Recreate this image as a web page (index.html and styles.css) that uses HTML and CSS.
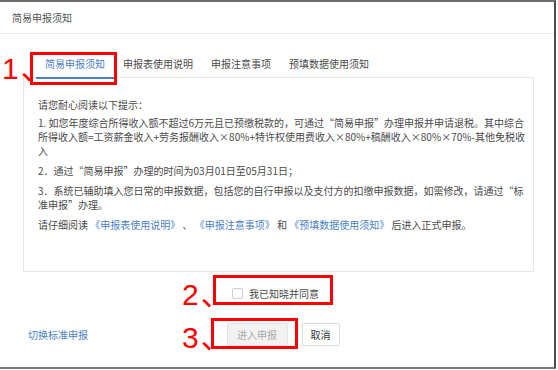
FILE: index.html
```html
<!DOCTYPE html>
<html lang="zh-CN">
<head>
  <meta charset="UTF-8" />
  <meta name="viewport" content="width=device-width, initial-scale=1.0" />
  <title>简易申报须知</title>
  <link rel="stylesheet" href="styles.css">
</head>
<body>
  <div class="dialog">
    <!-- Header -->
    <div class="dialog-header">简易申报须知</div>

    <div class="dialog-body">
      <!-- Tabs -->
      <div class="tabs">
        <div class="tab active">简易申报须知</div>
        <div class="tab">申报表使用说明</div>
        <div class="tab">申报注意事项</div>
        <div class="tab">预填数据使用须知</div>
      </div>

      <!-- Notice text -->
      <div class="notice">
        <p class="notice-title">请您耐心阅读以下提示：</p>
        <p>1. 如您年度综合所得收入额不超过6万元且已预缴税款的，可通过“简易申报”办理申报并申请退税。其中综合<br>所得收入额=工资薪金收入+劳务报酬收入×80%+特许权使用费收入×80%+稿酬收入×80%×70%-其他免税收<br>入</p>
        <p>2．通过“简易申报”办理的时间为03月01日至05月31日；</p>
        <p>3．系统已辅助填入您日常的申报数据，包括您的自行申报以及支付方的扣缴申报数据，如需修改，请通过“标<br>准申报”办理。</p>
        <p>请仔细阅读 <a class="link">《申报表使用说明》</a> 、 <a class="link">《申报注意事项》</a> 和 <a class="link">《预填数据使用须知》</a> 后进入正式申报。</p>
      </div>

      <!-- Agree -->
      <label class="agree">
        <span class="checkbox"></span>
        <span>我已知晓并同意</span>
      </label>
    </div>

    <!-- Footer -->
    <div class="dialog-footer">
      <a class="link switch-link">切换标准申报</a>
      <div class="buttons">
        <button class="btn btn-disabled" disabled>进入申报</button>
        <button class="btn">取消</button>
      </div>
    </div>

    <!-- Annotations -->
    <div class="mark-num mark-num-1">1<span class="dun">、</span></div>
    <div class="mark-box mark-box-1"></div>
    <div class="mark-num mark-num-2">2<span class="dun">、</span></div>
    <div class="mark-box mark-box-2"></div>
    <div class="mark-num mark-num-3">3<span class="dun">、</span></div>
    <div class="mark-box mark-box-3"></div>
  </div>
</body>
</html>
```

FILE: styles.css
```css
body {
  margin: 0;
  padding: 0;
  background: #fff;
  font-family: "Noto Sans CJK SC", "Liberation Sans", sans-serif;
  font-size: 10px;
  color: #4a4a4a;
}
/* Dialog frame */
.dialog {
  position: relative;
  box-sizing: border-box;
  width: 556px;
  height: 369px;
  border-top: 2px solid #6e6e6e;
  border-right: 2px solid #4c4c4c;
  border-bottom: 2px solid #7c7c7c;
  background: #fff;
}
.dialog-header {
  height: 31px;
  line-height: 31px;
  padding-left: 12px;
  color: #555;
  border-bottom: 1px solid #ececec;
}
.dialog-body {
  padding: 0 20px 0 23px;
}
/* Tabs */
.tabs {
  display: flex;
  margin-top: 16px;
  margin-bottom: -2px;
  padding-left: 13px;
}
.tab {
  position: relative;
  padding: 0 9px;
  line-height: 27px;
  border-bottom: 2px solid transparent;
  color: #4a4a4a;
}
.tab.active {
  color: #4a7fc6;
  border-bottom-color: #4a7fc6;
}
/* Notice box */
.notice {
  box-sizing: border-box;
  height: 195px;
  padding: 20px 14px 0 14px;
  border: 1px solid #e6e6e6;
}
.notice p {
  margin: 0 0 6px;
  line-height: 14px;
  white-space: nowrap;
}
.notice .notice-title {
  margin-bottom: 4px;
}
.link {
  color: #4a7fc6;
  cursor: pointer;
}
/* Agree row */
.agree {
  display: flex;
  justify-content: center;
  align-items: center;
  gap: 6px;
  height: 42px;
  padding-right: 6px;
}
.checkbox {
  box-sizing: border-box;
  width: 11px;
  height: 11px;
  border: 1px solid #cfcfcf;
  border-radius: 2px;
  background: #fff;
}
/* Footer */
.dialog-footer {
  display: grid;
  grid-template-columns: 1fr auto 1fr;
  align-items: center;
  height: 40px;
  padding: 0 16px 0 28px;
}
.buttons {
  display: flex;
  gap: 14px;
}
.btn {
  height: 23px;
  padding: 0 8px;
  font-family: inherit;
  font-size: 10px;
  color: #333;
  background: #fff;
  border: 1px solid #dcdcdc;
  border-radius: 2px;
}
.btn-disabled {
  width: 61px;
  color: #aaa;
  background: #f2f2f2;
  border-color: #e4e4e4;
}
/* Red annotations laid over the screenshot */
.mark-num {
  position: absolute;
  left: 2px;
  font-family: "Liberation Sans", "Noto Sans CJK SC", sans-serif;
  font-size: 30px;
  line-height: 30px;
  color: #f00;
}
.mark-num .dun {
  font-family: "Noto Sans CJK SC", sans-serif;
  margin-left: 2px;
}
.mark-num-1 { top: 49px; }
.mark-num-2 { top: 275px; left: 182px; }
.mark-num-3 { top: 318px; left: 182px; }
.mark-box {
  position: absolute;
  box-sizing: border-box;
  border: 3px solid #f00;
}
.mark-box-1 { left: 30px; top: 50px; width: 87px; height: 33px; }
.mark-box-2 { left: 213px; top: 273px; width: 120px; height: 30px; }
.mark-box-3 { left: 211px; top: 316px; width: 87px; height: 31px; }
```
